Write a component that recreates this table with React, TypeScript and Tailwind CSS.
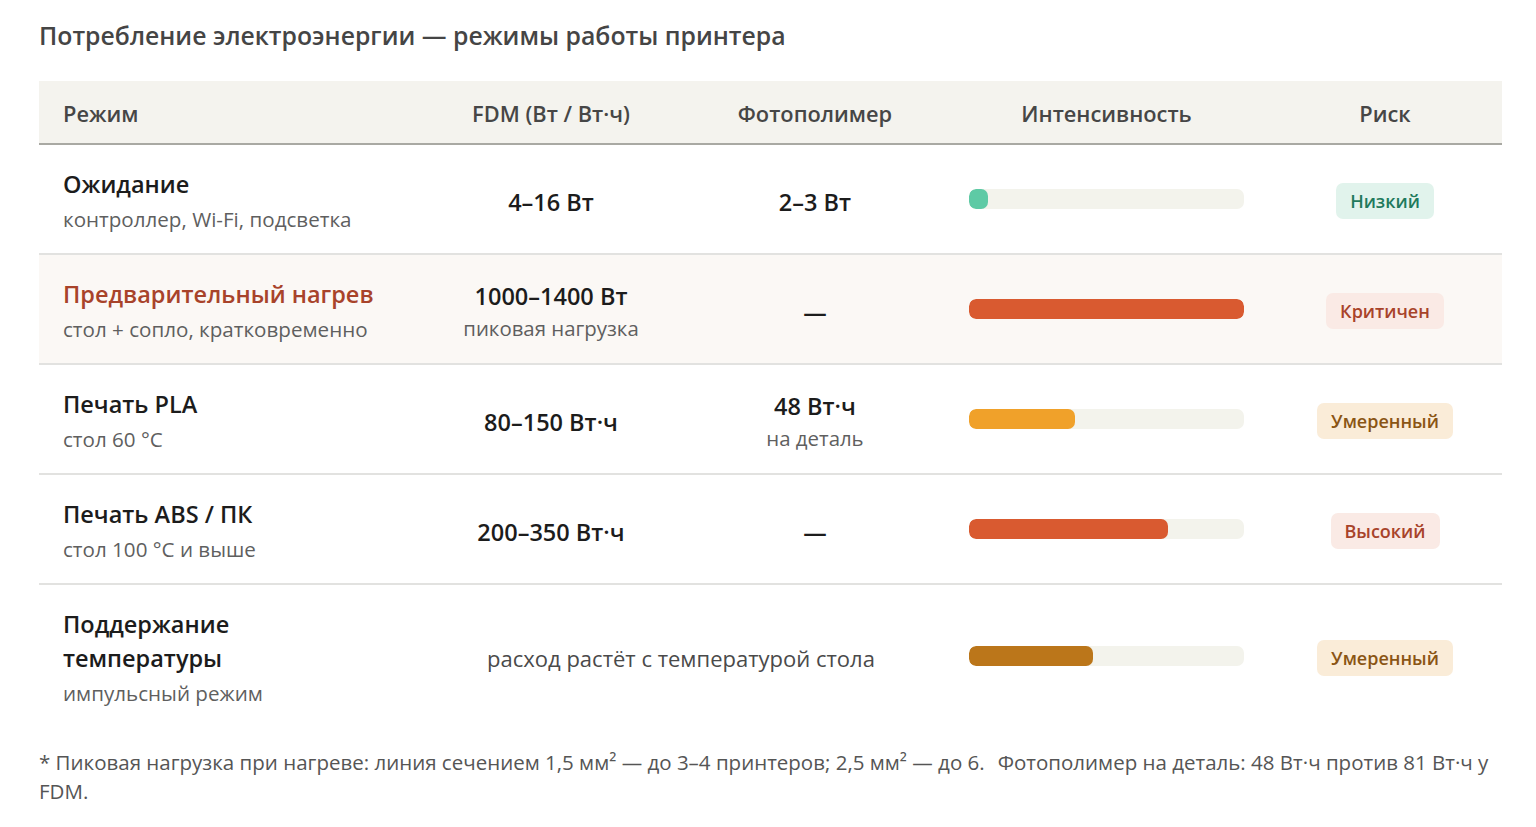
import React from "react";

type Row = {
  title: string;
  titleClass?: string;
  sub: string;
  fdm?: string;
  fdmSub?: string;
  photo?: string;
  photoSub?: string;
  span?: string;
  pct: number;
  barColor: string;
  badge: string;
  badgeClass: string;
  rowBg?: string;
};

const rows: Row[] = [
  {
    title: "Ожидание",
    sub: "контроллер, Wi-Fi, подсветка",
    fdm: "4–16 Вт",
    photo: "2–3 Вт",
    pct: 7,
    barColor: "#5ecaa5",
    badge: "Низкий",
    badgeClass: "bg-[#e1f3ec] text-[#1f7a5c]",
  },
  {
    title: "Предварительный нагрев",
    titleClass: "text-[#a8432a]",
    sub: "стол + сопло, кратковременно",
    fdm: "1000–1400 Вт",
    fdmSub: "пиковая нагрузка",
    photo: "—",
    pct: 100,
    barColor: "#d95a30",
    badge: "Критичен",
    badgeClass: "bg-[#faeae5] text-[#a8432a]",
    rowBg: "bg-[#fbf8f5]",
  },
  {
    title: "Печать PLA",
    sub: "стол 60 °C",
    fdm: "80–150 Вт·ч",
    photo: "48 Вт·ч",
    photoSub: "на деталь",
    pct: 38.5,
    barColor: "#f0a12a",
    badge: "Умеренный",
    badgeClass: "bg-[#faecd8] text-[#8a5514]",
  },
  {
    title: "Печать ABS / ПК",
    sub: "стол 100 °C и выше",
    fdm: "200–350 Вт·ч",
    photo: "—",
    pct: 72.5,
    barColor: "#d95a30",
    badge: "Высокий",
    badgeClass: "bg-[#faeae5] text-[#a8432a]",
  },
  {
    title: "Поддержание температуры",
    sub: "импульсный режим",
    span: "расход растёт с температурой стола",
    pct: 45,
    barColor: "#bb761a",
    badge: "Умеренный",
    badgeClass: "bg-[#faecd8] text-[#8a5514]",
  },
];

export default function App() {
  return (
    <div
      className="min-h-screen bg-white px-[39px] pt-[18px] pb-6 text-[#1c1c1c]"
      style={{ fontFamily: '"Open Sans", "Noto Sans", sans-serif' }}
    >
      <h1 className="text-[24.8px] leading-[34px] font-semibold text-[#454545]">
        Потребление электроэнергии — режимы работы принтера
      </h1>
      <table className="mt-[29px] w-[1463px] table-fixed border-collapse">
        <colgroup>
          <col className="w-[378px]" />
          <col className="w-[268px]" />
          <col className="w-[260px]" />
          <col className="w-[323px]" />
          <col className="w-[234px]" />
        </colgroup>
        <thead>
          <tr className="bg-[#f4f3ee] border-b-2 border-[#a9a9a3]">
            <th className="h-[63px] pt-[4px] pl-6 text-left text-[21.8px] font-semibold text-[#464646]">Режим</th>
            <th className="pt-[4px] text-center text-[21.8px] font-semibold text-[#464646]">FDM (Вт / Вт·ч)</th>
            <th className="pt-[4px] text-center text-[21.8px] font-semibold text-[#464646]">Фотополимер</th>
            <th className="pt-[4px] text-center text-[21.8px] font-semibold text-[#464646]">Интенсивность</th>
            <th className="pt-[4px] text-center text-[21.8px] font-semibold text-[#464646]">Риск</th>
          </tr>
        </thead>
        <tbody>
          {rows.map((r, i) => (
            <tr
              key={i}
              className={`${r.rowBg ?? ""} ${i < rows.length - 1 ? "border-b-2 border-[#e2e2e0]" : ""}`}
            >
              <td className="pl-6 pr-6 pt-[22px] pb-[16px] align-middle">
                <div className={`text-[23.5px] leading-[34px] font-semibold ${r.titleClass ?? "text-[#1c1c1c]"} ${i === rows.length - 1 ? "w-[300px]" : ""}`}>
                  {r.title}
                </div>
                <div className="text-[20.6px] leading-[36px] text-[#5f5f5f]">{r.sub}</div>
              </td>
              {r.span ? (
                <td colSpan={2} className="pt-[5px] text-center align-middle text-[22px] text-[#4a4a4a]">
                  {r.span}
                </td>
              ) : (
                <>
                  <td className="pt-[6px] text-center align-middle">
                    <div className="text-[23.5px] leading-[32px] font-semibold text-[#1c1c1c]">{r.fdm}</div>
                    {r.fdmSub && (
                      <div className="text-[20.4px] leading-[32px] text-[#5f5f5f]">{r.fdmSub}</div>
                    )}
                  </td>
                  <td className="pt-[6px] text-center align-middle">
                    <div className="text-[23.5px] leading-[32px] font-semibold text-[#1c1c1c]">{r.photo}</div>
                    {r.photoSub && (
                      <div className="text-[20.4px] leading-[32px] text-[#5f5f5f]">{r.photoSub}</div>
                    )}
                  </td>
                </>
              )}
              <td className="px-6 align-middle">
                <div className="h-[20px] w-[275px] overflow-hidden rounded-[7px] bg-[#f3f3ec]">
                  <div
                    className="h-full rounded-[7px]"
                    style={{ width: `${r.pct}%`, backgroundColor: r.barColor }}
                  />
                </div>
              </td>
              <td className="pt-[4px] text-center align-middle">
                <span
                  className={`inline-block rounded-[7px] px-[14px] py-[5px] text-[18px] leading-[26px] font-semibold ${r.badgeClass}`}
                >
                  {r.badge}
                </span>
              </td>
            </tr>
          ))}
        </tbody>
      </table>
      <p className="mt-[21px] w-[1463px] text-[20.5px] leading-[29px] text-[#555]">
        * Пиковая нагрузка при нагреве: линия сечением 1,5 мм² — до 3–4 принтеров; 2,5 мм² — до 6.
        <span className="ml-[13px]">Фотополимер на деталь: 48 Вт·ч против 81 Вт·ч у FDM.</span>
      </p>
    </div>
  );
}
